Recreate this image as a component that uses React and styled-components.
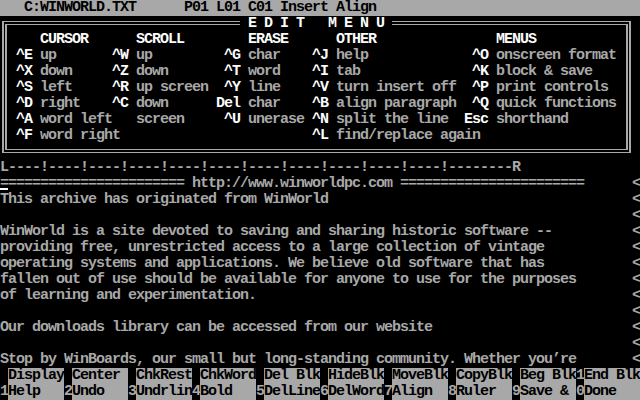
import styled, { createGlobalStyle } from "styled-components";

const GRAY = "#a8a8a8";
const WHITE = "#fcfcfc";

const GlobalStyle = createGlobalStyle`
    html, body {
        margin: 0;
        padding: 0;
        background: #000;
    }
`;

// column widths of the five help groups, key width inside each
const GROUP_COLS = "96px 104px 96px 152px 1fr";
const KEY_WIDTHS = [16, 16, 24, 16, 24];

const headings = ["CURSOR", "SCROLL", "ERASE", "OTHER", "MENUS"];

const menuRows = [
    [["^E", "up"], ["^W", "up"], ["^G", "char"], ["^J", "help"], ["^O", "onscreen format"]],
    [["^X", "down"], ["^Z", "down"], ["^T", "word"], ["^I", "tab"], ["^K", "block & save"]],
    [["^S", "left"], ["^R", "up screen"], ["^Y", "line"], ["^V", "turn insert off"], ["^P", "print controls"]],
    [["^D", "right"], ["^C", "down"], ["Del", "char"], ["^B", "align paragraph"], ["^Q", "quick functions"]],
    [["^A", "word left"], ["", "screen"], ["^U", "unerase"], ["^N", "split the line"], ["Esc", "shorthand"]],
    [["^F", "word right"], null, null, ["^L", "find/replace again"], null],
];

const RULER = "L" + "----!".repeat(11) + "--------R";

const docLines = [
    "=".repeat(23) + " http://www.winworldpc.com " + "=".repeat(23),
    "This archive has originated from WinWorld",
    "",
    "WinWorld is a site devoted to saving and sharing historic software --",
    "providing free, unrestricted access to a large collection of vintage",
    "operating systems and applications. We believe old software that has",
    "fallen out of use should be available for anyone to use for the purposes",
    "of learning and experimentation.",
    "",
    "Our downloads library can be accessed from our website",
    "",
    "Stop by WinBoards, our small but long-standing community. Whether you\u2019re",
];

const topKeys = [
    ["", "Display"], ["", "Center"], ["", "ChkRest"], ["", "ChkWord"], ["", "Del Blk"],
    ["", "HideBlk"], ["", "MoveBlk"], ["", "CopyBlk"], ["", "Beg Blk"], ["1", "End Blk"],
];

const bottomKeys = [
    ["1", "Help"], ["2", "Undo"], ["3", "Undrlin"], ["4", "Bold"], ["5", "DelLine"],
    ["6", "DelWord"], ["7", "Align"], ["8", "Ruler"], ["9", "Save &"], ["0", "Done"],
];

const App = () => {
    return (
        <>
            <GlobalStyle />
            <Screen>
                <StatusBar>{"   C:WINWORLD.TXT      P01 L01 C01 Insert Align"}</StatusBar>

                <Frame>
                    <FrameTitle>{" E D I T   M E N U "}</FrameTitle>
                    <InnerFrame>
                        <MenuRow>
                            {headings.map((h, i) => (
                                <Heading key={h} $indent={KEY_WIDTHS[i] + 8}>{h}</Heading>
                            ))}
                        </MenuRow>
                        {menuRows.map((row, r) => (
                            <MenuRow key={r}>
                                {row.map((entry, i) => (
                                    <Entry key={i}>
                                        <Key $width={KEY_WIDTHS[i]}>{entry ? entry[0] : ""}</Key>
                                        <Desc>{entry ? entry[1] : ""}</Desc>
                                    </Entry>
                                ))}
                            </MenuRow>
                        ))}
                    </InnerFrame>
                </Frame>

                <Line>{RULER}</Line>

                {docLines.map((text, i) => (
                    <DocLine key={i}>
                        <span>{text}</span>
                        <Flag>&lt;</Flag>
                        {i === 0 && <Cursor />}
                    </DocLine>
                ))}

                <KeyRow>
                    {topKeys.map(([n, label], i) => (
                        <KeySlot key={i}>
                            <KeyNum>{n}</KeyNum>
                            <KeyLabel>{label}</KeyLabel>
                        </KeySlot>
                    ))}
                </KeyRow>
                <KeyRow>
                    {bottomKeys.map(([n, label], i) => (
                        <KeySlot key={i}>
                            <KeyNum>{n}</KeyNum>
                            <KeyLabel>{label}</KeyLabel>
                        </KeySlot>
                    ))}
                </KeyRow>
            </Screen>
        </>
    );
};

export default App;

// styled components

const Screen = styled.div`
    width: 640px;
    height: 400px;
    overflow: hidden;
    background: #000;
    color: ${GRAY};
    font-family: "Liberation Mono", "DejaVu Sans Mono", monospace;
    font-size: 15px;
    font-weight: 700;
    letter-spacing: -1px;
    line-height: 16px;
`;

const Line = styled.div`
    height: 16px;
    white-space: pre;
`;

const StatusBar = styled(Line)`
    background: ${GRAY};
    color: #000;
`;

const Frame = styled.div`
    position: relative;
    box-sizing: border-box;
    width: 629px;
    margin: 5px 0 7px 2px;
    border: solid ${GRAY};
    border-width: 1px 2px;
    padding: 2px 1px;
`;

const FrameTitle = styled.div`
    position: absolute;
    top: -6px;
    left: 236px;
    height: 16px;
    background: #000;
    color: ${WHITE};
    white-space: pre;
`;

const InnerFrame = styled.div`
    border: solid ${GRAY};
    border-width: 1px 2px;
    padding: 7px 0 5px 9px;
`;

const MenuRow = styled.div`
    display: grid;
    grid-template-columns: ${GROUP_COLS};
    height: 16px;
    white-space: pre;
`;

const Heading = styled.div`
    padding-left: ${(p) => p.$indent}px;
    color: ${WHITE};
`;

const Entry = styled.div`
    display: flex;
    gap: 8px;
`;

const Key = styled.span`
    width: ${(p) => p.$width}px;
    text-align: right;
    color: ${WHITE};
`;

const Desc = styled.span`
    color: ${GRAY};
`;

const DocLine = styled.div`
    position: relative;
    display: grid;
    grid-template-columns: 632px 8px;
    height: 16px;
    white-space: pre;
`;

const Flag = styled.span`
    color: ${GRAY};
`;

const Cursor = styled.span`
    position: absolute;
    left: 0;
    top: 12px;
    width: 8px;
    height: 2px;
    background: ${WHITE};
`;

const KeyRow = styled.div`
    display: grid;
    grid-template-columns: repeat(10, 64px);
    height: 16px;
    white-space: pre;
`;

const KeySlot = styled.div`
    display: grid;
    grid-template-columns: 8px 56px;
`;

const KeyNum = styled.span`
    color: ${GRAY};
`;

const KeyLabel = styled.span`
    background: ${GRAY};
    color: #000;
`;
